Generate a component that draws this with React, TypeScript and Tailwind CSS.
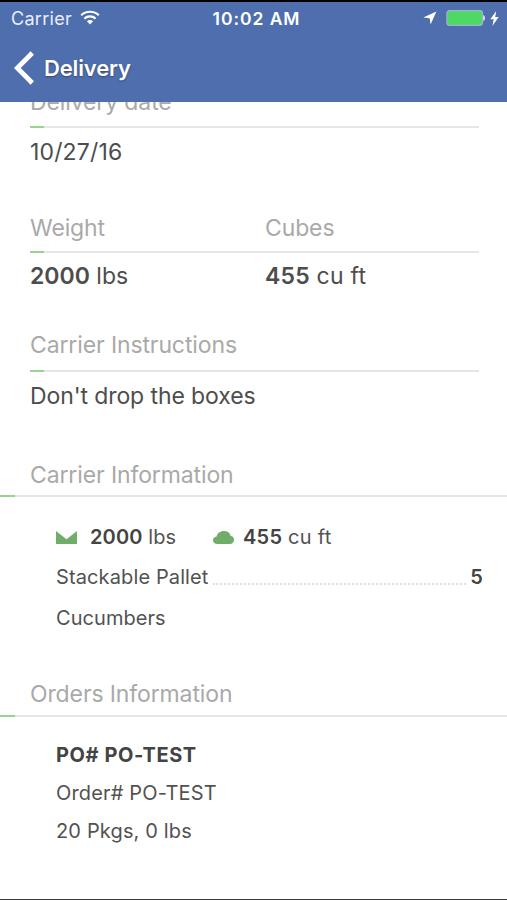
import type { ReactNode } from "react";

function StatusBar() {
  return (
    <div className="flex h-[33px] items-center justify-between pl-[11px] pr-[8px] text-[18px] leading-[33px]">
      <div className="flex w-[182px] items-center gap-[8px]">
        <span className="tracking-[0.28px] text-[#e9eef9]">Carrier</span>
        <svg width="20" height="15" viewBox="0 0 20 15" fill="none" className="mb-[2px]">
          <path d="M1.2 5.2C6.2.6 13.8.6 18.8 5.2" stroke="#fff" strokeWidth="2.2" />
          <path d="M4.4 8.6C7.6 5.7 12.4 5.7 15.6 8.6" stroke="#fff" strokeWidth="2.2" />
          <path d="M6.9 11.3C8.7 9.7 11.3 9.7 13.1 11.3L10 14.6Z" fill="#fff" />
        </svg>
      </div>
      <span className="text-[17.5px] font-semibold tracking-[0.95px]">10:02 AM</span>
      <div className="flex w-[179px] items-center justify-end">
        <svg width="14" height="14" viewBox="0 0 14 14" className="mb-[1px] mr-[9px]">
          <path d="M13.4.6 7.6 13.6 6.7 7.3.3 6.5Z" fill="#fff" />
        </svg>
        <svg width="40" height="16" viewBox="0 0 40 16" className="mb-[1px] mr-[4px]">
          <rect x=".9" y=".7" width="35.6" height="14.6" rx="2.5" fill="#4cd964" stroke="#9fb2cf" strokeWidth="1.2" />
          <path d="M37.3 5c2 .5 2 5.500 0 6Z" fill="#fff" />
        </svg>
        <svg width="9" height="15" viewBox="0 0 9 15" className="mb-[1px]">
          <path d="M6.2 0 .3 8.200h3.400L2.400 15l6.300-8.900H5.200Z" fill="#fff" />
        </svg>
      </div>
    </div>
  );
}

function Header() {
  return (
    <header className="relative z-10 h-[102px] border-t-2 border-black bg-[#4f6eae] text-white">
      <StatusBar />
      <div className="flex h-[66px] items-center pl-[14px]">
        <svg width="21" height="34" viewBox="0 0 21 34" fill="none">
          <path d="M18.3 2 3.3 17l15 15" stroke="#fff" strokeWidth="4.8" />
        </svg>
        <span className="ml-[9px] text-[22px] font-semibold leading-[30px] tracking-[-0.15px] [text-shadow:0_1px_2px_rgba(0,0,0,0.35)]">
          Delivery
        </span>
      </div>
    </header>
  );
}

function Rule({ wide = false }: { wide?: boolean }) {
  return (
    <div className="h-[2px] bg-[#e6e6e6]">
      <div className={wide ? "h-full w-[15px] bg-[#96d490]" : "h-full w-[14px] bg-[#96d490]"} />
    </div>
  );
}

function Label({ children }: { children: ReactNode }) {
  return <div className="text-[23px] leading-[30px] tracking-[-0.12px] text-[#a9a9a9]">{children}</div>;
}

function Value({ children }: { children: ReactNode }) {
  return <div className="text-[23px] leading-[30px] text-[#4d4d4d]">{children}</div>;
}

export default function App() {
  return (
    <div className="flex h-[900px] w-[507px] flex-col overflow-hidden whitespace-nowrap border-b border-[#3a3a3a] bg-white font-[Inter,'Liberation_Sans',sans-serif]">
      <Header />
      <main className="-mt-[15px] flex flex-col">
        <section className="ml-[30px] w-[449px]">
          <Label>Delivery date</Label>
          <div className="mt-[9px]"><Rule /></div>
          <div className="mt-[9px] tracking-[0.15px]"><Value>10/27/16</Value></div>
        </section>
        <section className="ml-[30px] mt-[46px] w-[449px]">
          <div className="grid grid-cols-[235px_1fr]">
            <Label>Weight</Label>
            <Label>Cubes</Label>
          </div>
          <div className="mt-[8px]"><Rule /></div>
          <div className="mt-[8px] grid grid-cols-[235px_1fr]">
            <Value><b className="font-semibold">2000</b> lbs</Value>
            <div className="tracking-[0.22px]"><Value><b className="font-semibold">455</b> cu ft</Value></div>
          </div>
        </section>
        <section className="ml-[30px] mt-[39px] w-[449px]">
          <Label>Carrier Instructions</Label>
          <div className="mt-[10px]"><Rule /></div>
          <div className="mt-[9px] tracking-[-0.1px]"><Value>Don't drop the boxes</Value></div>
        </section>
        <section className="mt-[49px]">
          <div className="ml-[30px]"><Label>Carrier Information</Label></div>
          <div className="mt-[5px]"><Rule wide /></div>
          <div className="mt-[26px] pl-[56px] pr-[24px] text-[20px] leading-[28px] tracking-[0.12px] text-[#525252]">
            <div className="flex items-center">
              <svg width="21" height="13" viewBox="0 0 21 13">
                <path d="M0 0 10.5 8.200 21 0V13H0Z" fill="#70ad69" />
              </svg>
              <span className="ml-[13px] w-[123px]"><b className="font-semibold text-[#444]">2000</b> lbs</span>
              <svg width="21" height="13" viewBox="0 0 21 13">
                <path d="M4.4 13C1.8 13 0 11.4 0 9.2 0 7.200 1.500 5.800 3.600 5.500 4.300 2.300 7 0 11 0c3.600 0 6 2 6.500 4.800 2.100.3 3.500 1.800 3.500 4 0 2.400-1.700 4.200-4.200 4.200Z" fill="#70ad69" />
              </svg>
              <span className="ml-[9px] tracking-[0.25px]"><b className="font-semibold text-[#444]">455</b> cu ft</span>
            </div>
            <div className="mt-[12px] flex">
              <span>Stackable Pallet</span>
              <span className="mb-[6px] ml-[4px] mr-[4px] flex-1 border-b-2 border-dotted border-[#e0e0e0]" />
              <b className="font-semibold text-[#444]">5</b>
            </div>
            <div className="mt-[13px] tracking-[0.05px]">Cucumbers</div>
          </div>
        </section>
        <section className="mt-[47px]">
          <div className="ml-[30px]"><Label>Orders Information</Label></div>
          <div className="mt-[6px]"><Rule wide /></div>
          <div className="mt-[19px] pl-[56px] text-[20px] leading-[38px] tracking-[0.15px] text-[#525252]">
            <div className="font-bold tracking-[0.6px] text-[#444]">PO# PO-TEST</div>
            <div>Order# PO-TEST</div>
            <div>20 Pkgs, 0 lbs</div>
          </div>
        </section>
      </main>
    </div>
  );
}
